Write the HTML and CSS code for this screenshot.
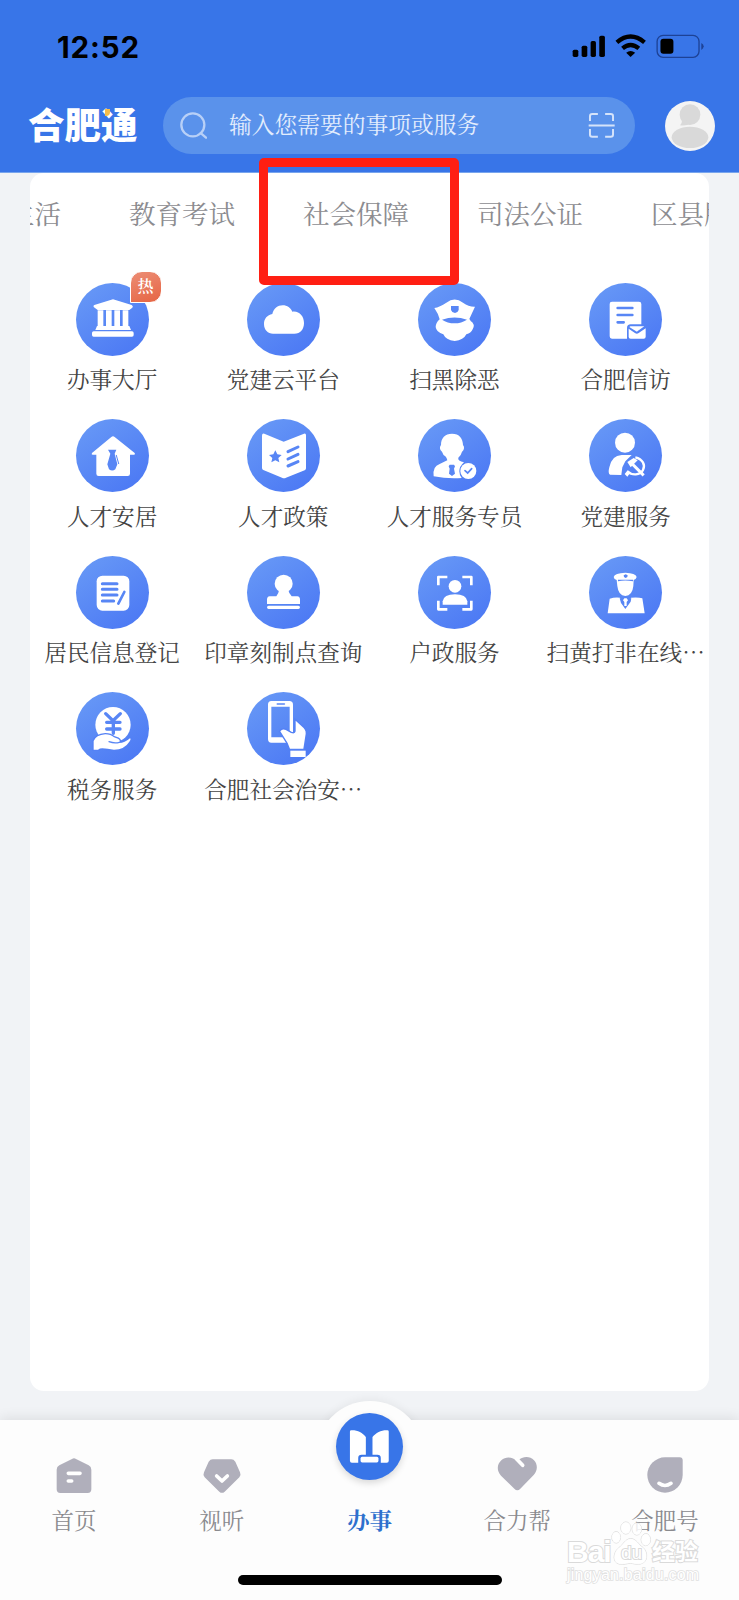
FILE: index.html
```html
<!DOCTYPE html>
<html lang="zh-CN">
<head>
<meta charset="utf-8">
<title>合肥通</title>
<link rel="stylesheet" href="styles.css">
</head>
<body>
<div class="screen">
  <header class="header">
    <div class="status">
      <span class="time">12:52</span>
      <svg class="status-icons" viewBox="610 100 400 78">
        <rect x="612" y="150" width="17" height="22" rx="5"/><rect x="639" y="138" width="17" height="34" rx="5"/><rect x="666" y="124" width="16" height="48" rx="5"/><rect x="692" y="108" width="17" height="64" rx="5"/>
        <path d="M745 128Q786 93 828 128M762 146Q786 126 811 146" fill="none" stroke="#000" stroke-width="13"/>
        <path d="M773 159Q786 149 800 159L786 172Z"/>
        <rect x="866" y="107" width="126" height="66" rx="18" fill="none" stroke="#1d4296" stroke-width="4"/>
        <rect x="876" y="117" width="39" height="45" rx="9"/><path d="M999 130Q1006 134 1006 140T999 151Z" fill="#1d4296"/>
      </svg>
    </div>
    <div class="topbar">
      <div class="logo">合肥通<i class="logo-spark"></i></div>
      <div class="search">
        <svg class="search-icon" viewBox="540 336 82 80"><circle cx="579" cy="374" r="35"/><path d="M603 399L619 413"/></svg>
        <span class="search-text">输入您需要的事项或服务</span>
        <svg class="scan-icon" viewBox="654 336 82 80"><path d="M660 362V348Q660 341 667 341H684M706 341H723Q730 341 730 348V362M660 387V403Q660 410 667 410H684M706 410H723Q730 410 730 403V387M656 376H735"/></svg>
      </div>
      <svg class="avatar" viewBox="888 300 150 150"><circle cx="963" cy="375" r="75" fill="#f4f4f4"/><g fill="#d9d9d9"><circle cx="963" cy="341" r="31"/><path d="M937 350Q942 364 933 373Q952 376 966 367Z"/><ellipse cx="963" cy="409" rx="55" ry="32"/></g></svg>
    </div>
  </header>

  <main class="card">
    <nav class="tabs">
      <span class="tab tab-first">生活</span><span class="tab">教育考试</span><span class="tab">社会保障</span><span class="tab">司法公证</span><span class="tab">区县服务</span>
    </nav>
    <section class="grid">
      <div class="item"><div class="disc"><svg viewBox="137 67 219 219"><path d="M190 139Q188 135 192 133L243 117Q248 115 253 117L304 133Q310 136 306 141L297 148H202ZM202 149H219V196H202ZM227 149H244V196H227ZM252 149H269V196H252ZM277 149H294V196H277ZM200 196H297L302 208H195ZM190 212H305Q310 212 310 217V223Q310 228 305 228H190Q185 228 185 223V217Q185 212 190 212Z"/></svg><span class="hot">热</span></div><span class="label">办事大厅</span></div>
      <div class="item"><div class="disc"><svg viewBox="651 67 219 219"><path d="M729 219C714 219 702 208 702 190C702 174 712 163 727 160C731 144 743 134 758 134C772 134 782 142 787 153C808 150 822 167 822 187C822 206 811 219 793 219Z"/></svg></div><span class="label">党建云平台</span></div>
      <div class="item"><div class="disc"><svg viewBox="145 67 219 219"><path d="M194 142Q210 139 230 126Q255 107 280 126Q298 139 316 138Q307 157 299 175Q304 181 302 180Q318 190 309 206Q304 218 290 221Q282 238 255 241Q228 238 221 221Q200 215 198 199Q198 187 210 176Q206 159 194 142Z"/><path class="cut" d="M244 136H267V148Q265 155 256 157Q246 155 244 148ZM217 177Q255 164 292 177Q275 188 255 188Q233 188 217 177Z"/></svg></div><span class="label">扫黑除恶</span></div>
      <div class="item"><div class="disc"><svg viewBox="658 67 219 219"><path d="M727 123H808Q815 123 815 130V191H783Q772 191 772 202V234H727Q720 234 720 227V130Q720 123 727 123Z"/><path d="M782 197H824L804 211Q801 214 798 211L779 199ZM777 204L797 218Q802 221 807 217L828 203V228Q828 234 822 234H783Q777 234 777 228Z"/><path class="line" stroke-width="8" d="M744 142H788M744 163H788M744 185H762"/></svg></div><span class="label">合肥信访</span></div>

      <div class="item"><div class="disc"><svg viewBox="137 477 219 219"><path d="M185 579L243 531Q248 526 253 531L313 579Q316 584 311 584H299V641Q299 648 292 648H205Q198 648 198 641V584H187Q182 584 185 579Z"/><path class="cut" d="M233 569H258L253 581L261 613L255 628Q246 635 236 628L231 613L240 581Z"/><path class="line" stroke-width="3" d="M258 586L265 611"/></svg></div><span class="label">人才安居</span></div>
      <div class="item"><div class="disc"><svg viewBox="651 477 219 219"><path d="M703 521L761 545L822 521Q828 519 828 526V625Q828 629 824 631L768 653Q762 656 756 653L700 630Q696 628 696 624V527Q696 519 703 521Z"/><path class="cut" d="M736 571L742 583L755 585L745 594L748 607L736 601L724 607L727 594L717 585L730 583Z"/><path class="line" stroke-width="9" d="M774 575L804 561M774 597L804 583M774 618L804 605"/></svg></div><span class="label">人才政策</span></div>
      <div class="item"><div class="disc"><svg viewBox="145 477 219 219"><path d="M247 521C269 521 280 535 280 556C285 560 284 571 277 575Q274 587 266 593Q263 602 283 607Q269 619 269 634Q269 645 276 654Q234 657 192 649Q188 619 210 612L233 601Q233 596 227 589Q220 585 217 575C209 569 210 560 214 555C214 534 226 521 247 521Z"/><path class="cut" d="M240 614H253L256 619L253 626L256 641L247 648L238 641L240 626L237 619Z"/><circle cx="296" cy="633" r="24"/><path class="line" stroke-width="5" d="M286 632L294 639L306 626"/></svg></div><span class="label">人才服务专员</span></div>
      <div class="item"><div class="disc"><svg viewBox="658 477 219 219"><circle cx="766" cy="548" r="30"/><path d="M756 585H786L767 604L758 622L755 645L721 644Q714 641 719 622Q726 586 756 585Z"/><path fill="none" stroke="#fff" stroke-width="7" d="M797 592C819 597 828 615 820 630C812 646 787 647 773 634"/><path fill="none" stroke="#fff" stroke-width="9" d="M785 609L822 646"/><path d="M773 606L792 594L804 601L783 622ZM765 642L774 631L782 638L773 650Z"/></svg></div><span class="label">党建服务</span></div>

      <div class="item"><div class="disc"><svg viewBox="137 46 219 219"><rect x="199" y="105" width="98" height="105" rx="17"/><path class="line" stroke-width="9" d="M216 129H260M216 146H260M216 163H260M216 181H250"/><path class="line" stroke-width="8" d="M282 154L264 189"/></svg></div><span class="label">居民信息登记</span></div>
      <div class="item"><div class="disc"><svg viewBox="651 46 219 219"><circle cx="761" cy="129" r="27"/><path d="M747 149H775Q777 159 785 167H802Q810 168 810 177V190H711V177Q711 168 719 167H739Q746 159 747 149ZM716 195H805Q810 195 810 200T805 205H716Q711 205 711 200T716 195Z"/></svg></div><span class="label">印章刻制点查询</span></div>
      <div class="item"><div class="disc"><svg viewBox="145 46 219 219"><circle cx="256" cy="137" r="19"/><path d="M219 192V182Q222 161 256 161T293 182V192Z"/><path fill="none" stroke="#fff" stroke-width="8" stroke-linejoin="round" d="M206 134V109H233M278 109H305V134M206 180V206H233M278 206H305V180"/></svg></div><span class="label">户政服务</span></div>
      <div class="item"><div class="disc"><svg viewBox="658 46 219 219"><path d="M732 109Q735 97 767 96Q798 97 801 109Q799 116 792 118L791 136Q788 165 767 166Q746 165 743 136L741 118Q733 116 732 109ZM720 174Q735 169 751 171L763 196H771L784 171Q807 169 818 173L825 218H714Z"/><path class="cut" d="M745 117H790V122Q766 117 745 122ZM762 104L768 101L774 104L773 109L768 112L763 109ZM750 173H755L767 197L780 173H785L783 183L767 205L754 187Z"/><path d="M764 173H771L775 179L771 184V196H764V184L760 179Z"/></svg></div><span class="label">扫黄打非在线…</span></div>

      <div class="item"><div class="disc"><svg viewBox="137 456 219 219"><circle cx="248" cy="554" r="53"/><path class="line" stroke-width="10" d="M226 521L248 542L270 521M229 547H269M229 567H269M249 544V580"/><path class="edge" d="M190 603Q197 585 225 583Q241 583 251 592L263 596Q273 602 264 609Q282 610 299 595Q303 598 297 605Q282 629 251 629Q231 626 216 625Q208 625 203 629H190Z"/><path class="line" stroke-width="4" d="M236 605Q252 611 267 607"/></svg></div><span class="label">税务服务</span></div>
      <div class="item"><div class="disc"><svg viewBox="651 456 219 219"><path fill-rule="evenodd" d="M724 483H778Q789 483 789 494V597Q789 608 778 608H724Q714 608 714 597V494Q714 483 724 483ZM724 500V592H779V500Z"/><path class="line" stroke-width="5" d="M742 492H763"/><path class="edge" d="M751 574Q757 565 767 570L783 579Q796 583 797 574V542L815 559Q828 569 827 581L820 626H780L773 609Z"/><path d="M781 632H827V651H781Z"/></svg></div><span class="label">合肥社会治安…</span></div>
    </section>
  </main>

  <footer class="navbar">
    <div class="nav"><svg class="nav-icon" viewBox="160 260 120 120"><path d="M214 269Q220 265 226 269L264 288Q272 292 272 301V360Q272 371 261 371H179Q168 371 168 360V301Q168 292 176 288Z"/><path class="mark" d="M203 312H238M203 335H213"/></svg><span class="nav-label">首页</span></div>
    <div class="nav"><svg class="nav-icon" viewBox="604 260 120 120"><path d="M636 270H692Q699 270 704 277L718 309Q722 317 716 324L672 367Q664 374 656 367L612 324Q606 317 610 309L624 277Q629 270 636 270Z"/><path class="mark" d="M648 320L664 335L680 320"/></svg><span class="nav-label">视听</span></div>
    <div class="nav active"><span class="halo"></span><span class="orb"><svg viewBox="48 56 202 202"><path d="M94 108C112 107 128 115 138 128V182H125Q115 182 115 192V206H96Q90 206 90 200V112Q90 108 94 108ZM203 108C185 107 169 115 158 128V182H173Q183 182 183 192V206H201Q207 206 207 200V112Q207 108 203 108Z"/><rect x="122" y="188" width="54" height="17" rx="5"/></svg></span><span class="nav-label">办事</span></div>
    <div class="nav"><svg class="nav-icon" viewBox="384 260 120 120"><path d="M397 273C411 260 432 263 444 276C463 259 482 260 495 273C507 286 506 304 494 317L454 358Q445 367 436 358L396 319C382 304 384 285 397 273Z"/><path class="mark" d="M443 269L461 288"/></svg><span class="nav-label">合力帮</span></div>
    <div class="nav"><svg class="nav-icon" viewBox="828 260 120 120"><path d="M888 264H932Q941 264 941 273V317A53 53 0 1 1 888 264Z"/><path class="mark" d="M870 342Q888 355 906 342"/></svg><span class="nav-label">合肥号</span></div>
    <span class="home-bar"></span>
  </footer>

  <div class="highlight"></div>
  <div class="watermark">
    <div class="wm-row"><span class="wm-bai">Bai</span><svg class="wm-paw" viewBox="728 448 122 132"><ellipse cx="743" cy="497" rx="13" ry="17"/><ellipse cx="772" cy="469" rx="15" ry="18"/><ellipse cx="805" cy="472" rx="14" ry="18"/><ellipse cx="832" cy="504" rx="14" ry="18"/><path d="M787 501C803 501 809 518 824 528C840 543 838 574 815 577C800 579 795 575 786 575C775 575 766 580 752 577C732 573 733 545 749 530C765 519 770 501 787 501Z"/></svg><span class="wm-du">du</span><span class="wm-cn">经验</span></div>
    <div class="wm-url">jingyan.baidu.com</div>
  </div>
</div>
</body>
</html>
```
FILE: styles.css
```css
* { box-sizing: border-box; }
body { margin: 0; font-family: "Noto Serif CJK SC", "Noto Serif SC", "Noto Sans CJK SC", serif; }
svg { display: block; }
.screen { position: relative; width: 739px; height: 1600px; overflow: hidden; background: #f1f3f6; display: flex; flex-direction: column; }

.header { height: 173px; flex: none; background: #3875e8; border-bottom: 1px solid #78a5ed; }
.status { height: 97px; padding: 31px 34px 0 57px; display: flex; justify-content: space-between; align-items: flex-start; }
.time { font: 700 29.5px/32px Inter, sans-serif; letter-spacing: 0.9px; color: #000; }
.status-icons { width: 133px; height: 26px; margin-top: 2px; }
.topbar { display: flex; align-items: center; padding: 0 24px 0 28px; height: 57px; }
.logo { position: relative; width: 135px; margin-top: -4px; font: 900 36.5px/40px "Noto Sans CJK SC", sans-serif; color: #fff; white-space: nowrap; }
.logo-spark { position: absolute; left: 77px; top: 5px; width: 5px; height: 7px; background: #f5bd4b; border-radius: 0 0 4px 0; }
.search { width: 472px; height: 57px; border-radius: 29px; background: #5a92eb; display: flex; align-items: center; padding: 0 20px 0 17px; }
.search-icon { width: 27px; height: 27px; fill: none; stroke: #b8d0f7; stroke-width: 7; stroke-linecap: round; }
.search-text { margin: -4px 0 0 22px; flex: 1; font-size: 22.75px; line-height: 30px; color: #e3edfd; white-space: nowrap; }
.scan-icon { width: 27px; height: 27px; fill: none; stroke: #d5e3fa; stroke-width: 6; }
.avatar { width: 50px; height: 50px; margin-left: auto; }

.card { flex: none; width: 679px; height: 1218px; margin-left: 30px; background: #fff; border-radius: 14px; overflow: hidden; }
.tabs { display: flex; gap: 68px; height: 79px; margin-left: -22px; white-space: nowrap; }
.tab { flex: none; font-size: 26.5px; line-height: 79px; color: #8c8c90; }
.tab-first { width: 53px; }
.grid { display: grid; grid-template-columns: repeat(4, 171.2px); grid-auto-rows: 136.6px; margin: 30.5px -4px 0 -3.5px; }
.item { display: flex; flex-direction: column; align-items: center; }
.disc { position: relative; width: 73px; height: 73px; border-radius: 50%; background: linear-gradient(145deg, #6697f6 10%, #4c79f4 90%); }
.disc svg { width: 73px; height: 73px; fill: #fff; }
.disc .cut { fill: #5886f5; }
.disc .line { fill: none; stroke: #5886f5; stroke-linecap: round; }
.disc .edge { stroke: #5481f5; stroke-width: 8; paint-order: stroke; }
.hot { position: absolute; left: 54px; top: -12px; width: 32px; height: 32px; border: 1px solid #fff; border-radius: 12px 12px 12px 0; background: linear-gradient(160deg, #ec8d75, #e66543); color: #fff; font-size: 16px; font-weight: 600; line-height: 27px; text-align: center; }
.label { margin-top: 7.5px; font-size: 22.6px; line-height: 30px; color: #444; white-space: nowrap; }

.navbar { position: relative; flex: none; margin-top: 29px; height: 180px; display: flex; background: #fdfdfd; box-shadow: 0 -2px 12px rgba(0,0,0,.09); }
.nav { flex: 1; display: flex; flex-direction: column; align-items: center; padding-top: 36px; }
.nav-icon { width: 40px; height: 40px; fill: #b0afbb; }
.mark { fill: none; stroke: #fff; stroke-width: 11; stroke-linecap: round; stroke-linejoin: round; }
.nav-label { margin-top: 8px; font-size: 22.5px; line-height: 30px; color: #8a8a8e; }
.active { position: relative; padding-top: 0; }
.active .nav-label { position: relative; margin-top: 23px; font-weight: 700; color: #2e70cd; }
.halo { position: absolute; left: 20px; top: -19px; width: 108px; height: 108px; border-radius: 50%; background: #fdfdfd; box-shadow: 0 -2px 8px rgba(0,0,0,.05); clip-path: inset(-12px -12px 89px -12px); }
.orb { position: relative; width: 67px; height: 67px; margin-top: -7px; margin-bottom: 1px; border-radius: 50%; background: #3875e8; box-shadow: 0 3px 7px rgba(0,0,0,.15); }
.orb svg { width: 67px; height: 67px; fill: #fff; }
.home-bar { position: absolute; left: 238px; top: 155px; width: 264px; height: 10px; border-radius: 5px; background: #000; }

.highlight { position: absolute; left: 259px; top: 158px; width: 200px; height: 127px; border: 9px solid #ff1f13; border-radius: 5px; }
.watermark { position: absolute; left: 567px; top: 1519px; width: 134px; color: #fff; -webkit-text-stroke: 2px #dadada; paint-order: stroke fill; font-family: "Liberation Sans", "Noto Sans CJK SC", sans-serif; }
.wm-row { position: relative; display: flex; align-items: flex-end; height: 46px; }
.wm-bai { width: 44px; font-size: 30px; line-height: 27px; font-weight: 700; letter-spacing: -1px; }
.wm-paw { width: 41px; height: 44px; fill: #fff; fill-opacity: .85; stroke: #d9d9d9; stroke-width: 3; }
.wm-du { position: absolute; left: 54px; bottom: 2px; font-size: 19px; line-height: 20px; }
.wm-cn { font: 700 23px/29px "Noto Sans CJK SC", sans-serif; }
.wm-url { font-size: 16px; line-height: 20px; -webkit-text-stroke: 1.6px #e0e0e0; letter-spacing: .2px; }
```
